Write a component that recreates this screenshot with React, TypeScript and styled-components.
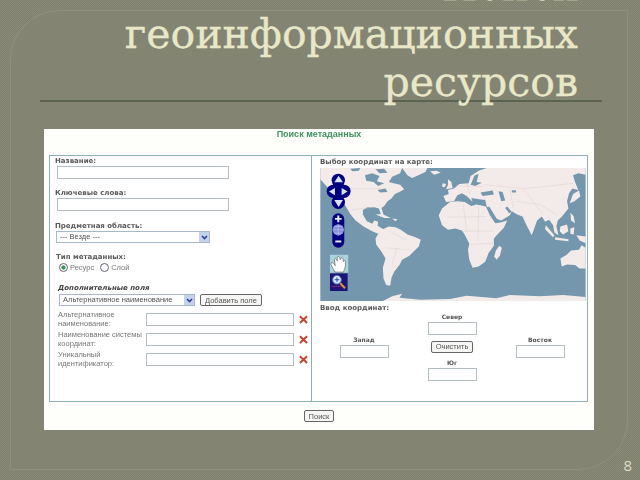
import { FC } from 'react';
import styled, { createGlobalStyle } from 'styled-components';

const GlobalStyle = createGlobalStyle`
  html, body {
    margin: 0;
    padding: 0;
    background: #838573;
  }
`;

const App: FC = () => {
  return (
    <>
      <GlobalStyle />
      <Page>
        <Frame>
          <Title>
            Поиск
            <br />
            геоинформационных
            <br />
            ресурсов
          </Title>
          <Sheet>
            <SheetHeading>Поиск метаданных</SheetHeading>
            <Columns>
              <LeftColumn>
                <BoldLabel>Название:</BoldLabel>
                <TextField $width={172} $left={2} />
                <BoldLabel $top={10}>Ключевые слова:</BoldLabel>
                <TextField $width={172} $left={2} />
                <BoldLabel $top={11}>Предметная область:</BoldLabel>
                <SelectBox $width={154} $left={1}>
                  --- Везде ---
                  <SelectArrow />
                </SelectBox>
                <BoldLabel $top={10} $left={1}>
                  Тип метаданных:
                </BoldLabel>
                <RadioRow>
                  <Radio $checked />
                  <RadioText>Ресурс</RadioText>
                  <Radio />
                  <RadioText>Слой</RadioText>
                </RadioRow>
                <ExtraHeading>Дополнительные поля</ExtraHeading>
                <AddRow>
                  <SelectBox $width={136}>
                    Альтернативное наименование
                    <SelectArrow />
                  </SelectBox>
                  <PlainButton>Добавить поле</PlainButton>
                </AddRow>
                {extraFields.map((field) => (
                  <ExtraRow key={field}>
                    <ExtraLabel>{field}</ExtraLabel>
                    <TextField $width={148} />
                    <RemoveIcon />
                  </ExtraRow>
                ))}
              </LeftColumn>
              <RightColumn>
                <BoldLabel>Выбор координат на карте:</BoldLabel>
                <WorldMap />
                <BoldLabel $top={3}>Ввод координат:</BoldLabel>
                <CoordGrid>
                  <CoordCell $col={2}>
                    <CoordLabel>Север</CoordLabel>
                    <TextField $width={49} />
                  </CoordCell>
                  <CoordCell $col={1}>
                    <CoordLabel>Запад</CoordLabel>
                    <TextField $width={49} />
                  </CoordCell>
                  <CoordCell $col={2} $center>
                    <PlainButton>Очистить</PlainButton>
                  </CoordCell>
                  <CoordCell $col={3}>
                    <CoordLabel>Восток</CoordLabel>
                    <TextField $width={49} />
                  </CoordCell>
                  <CoordCell $col={2}>
                    <CoordLabel>Юг</CoordLabel>
                    <TextField $width={49} />
                  </CoordCell>
                </CoordGrid>
              </RightColumn>
            </Columns>
            <SearchRow>
              <PlainButton>Поиск</PlainButton>
            </SearchRow>
          </Sheet>
        </Frame>
        <PageNumber>8</PageNumber>
      </Page>
    </>
  );
};

export default App;

const extraFields = [
  'Альтернативное наименование:',
  'Наименование системы координат:',
  'Уникальный идентификатор:',
];

const RemoveIcon: FC = () => (
  <RemoveSvg viewBox="0 0 10 10">
    <path d="M1 1.5 L9 8.8 M9 1.5 L1 8.8" stroke="#c4442c" strokeWidth="2.2" />
  </RemoveSvg>
);

const SelectArrow: FC = () => (
  <ArrowBox>
    <svg width="7" height="5" viewBox="0 0 7 5">
      <path d="M1 1 L3.5 3.5 L6 1" fill="none" stroke="#2b3f8f" strokeWidth="1.6" />
    </svg>
  </ArrowBox>
);

const WorldMap: FC = () => (
  <MapFrame>
    <svg width="266" height="133" viewBox="30 50 798 400" style={{ display: 'block' }}>
      <rect x="30" y="50" width="798" height="400" fill="#7597ae" />
      <g fill="#f3ebe9">
        {/* north america */}
        <path d="M30 50 L276 50 L270 66 L246 76 L236 92 L250 96 L270 100 L282 114 L268 122 L254 128 L244 142 L232 150 L222 164 L214 170 L220 190 L214 194 L206 172 L192 168 L172 168 L158 176 L158 190 L170 210 L186 218 L192 208 L204 212 L202 224 L216 232 L224 236 L204 248 L186 240 L160 226 L136 208 L120 188 L106 164 L92 142 L66 122 L48 104 L30 84 Z" />
        {/* cuba */}
        <path d="M196 190 L216 188 L242 200 L222 200 Z" />
        <path d="M246 202 L262 204 L256 210 Z" />
        {/* greenland, iceland */}
        <path d="M276 50 L352 50 L346 62 L328 70 L306 80 L292 72 Z" />
        <path d="M360 60 L380 58 L392 64 L372 70 Z" />
        {/* south america */}
        <path d="M204 248 L218 234 L236 226 L256 228 L272 236 L292 250 L316 258 L332 266 L326 286 L310 302 L298 314 L276 326 L268 342 L252 362 L244 380 L240 404 L228 402 L220 382 L218 350 L226 322 L214 302 L198 280 L196 262 Z" />
        {/* africa */}
        <path d="M386 192 L396 172 L420 152 L444 150 L464 152 L484 164 L500 160 L528 166 L540 192 L556 216 L572 214 L592 208 L582 230 L566 246 L552 262 L552 284 L536 306 L526 332 L506 346 L488 350 L478 326 L474 296 L478 278 L464 250 L456 238 L436 232 L414 236 L396 222 Z" />
        {/* madagascar */}
        <path d="M568 284 L576 290 L570 314 L560 326 L553 316 L558 298 Z" />
        {/* europe and asia */}
        <path d="M476 96 L482 74 L506 58 L530 50 L828 50 L828 70 L806 66 L790 72 L796 92 L806 116 L788 112 L778 126 L772 150 L776 172 L758 194 L744 208 L740 226 L746 252 L734 244 L730 222 L718 206 L706 212 L696 196 L682 208 L666 252 L652 226 L638 196 L622 190 L606 180 L600 192 L574 208 L558 202 L540 176 L530 164 L526 146 L508 144 L484 140 L488 152 L472 136 L456 126 L442 132 L432 150 L408 152 L400 134 L416 128 L414 116 L432 112 L448 98 Z" />
        {/* uk and ireland */}
        <path d="M414 84 L424 92 L428 110 L408 114 L414 100 Z" />
        <path d="M398 96 L408 98 L404 108 L396 106 Z" />
        {/* japan, philippines */}
        <path d="M790 128 L808 118 L812 136 L794 150 L780 156 Z" />
        <path d="M782 184 L792 196 L796 216 L784 208 Z" />
        {/* indonesia */}
        <path d="M708 222 L734 252 L730 258 L706 234 Z" />
        <path d="M736 258 L776 264 L776 270 L736 266 Z" />
        <path d="M752 226 L772 220 L776 240 L760 250 L750 240 Z" />
        <path d="M782 232 L794 228 L792 250 L782 248 Z" />
        <path d="M800 252 L828 256 L828 276 L810 268 Z" />
        {/* australia */}
        <path d="M752 322 L770 312 L784 298 L808 296 L816 282 L828 290 L828 352 L810 352 L796 342 L772 340 L756 346 Z" />
        {/* antarctica */}
        <path d="M218 450 L246 436 L276 428 L268 440 L330 446 L420 444 L470 434 L560 442 L600 432 L690 436 L760 432 L828 438 L828 450 Z" />
      </g>
      <g fill="#7597ae">
        {/* hudson bay and arctic */}
        <path d="M164 72 L186 66 L208 74 L200 90 L222 96 L204 104 L190 92 L168 88 Z" />
        <path d="M196 54 L222 52 L232 64 L208 66 Z" />
        <path d="M120 52 L150 50 L146 58 L126 60 Z" />
        {/* great lakes */}
        <path d="M202 116 L226 112 L232 122 L210 124 Z" />
        {/* baltic */}
        <path d="M494 72 L506 68 L500 92 L516 94 L496 104 L482 100 Z" />
        {/* black sea, caspian */}
        <path d="M512 124 L548 118 L552 130 L518 134 Z" />
        <path d="M566 120 L578 122 L586 148 L574 150 Z" />
        {/* red sea, gulf */}
        <path d="M532 168 L538 166 L566 212 L560 214 Z" />
        <path d="M586 170 L592 166 L606 182 L598 186 Z" />
        {/* lakes in central asia */}
        <path d="M606 118 L618 116 L618 124 L606 124 Z" />
      </g>
      <g fill="none" stroke="#d8cbc9" strokeWidth="1.2">
        <path d="M70 112 L222 112 M120 176 L190 168 M260 290 L246 340 M226 290 L300 296 M238 240 L290 268" />
        <path d="M410 198 L530 196 M460 160 L470 236 M506 166 L504 270 M480 280 L550 276 M456 240 L550 240" />
        <path d="M440 104 L520 106 M470 96 L480 130 M520 100 L640 112 L720 104 L790 96 M600 112 L610 170 M640 112 L700 190 M620 150 L690 160 L740 190" />
      </g>
      {/* pan control */}
      <g fill="#00007e">
        <circle cx="84" cy="87" r="20" />
        <circle cx="84" cy="153" r="20" />
        <circle cx="69" cy="120" r="20" />
        <circle cx="101" cy="120" r="20" />
        <rect x="68" y="90" width="32" height="60" />
      </g>
      <g fill="#dbe2f4">
        <path d="M85 73 L98 93 L72 93 Z" />
        <path d="M85 167 L98 146 L72 146 Z" />
        <path d="M56 121 L74 110 L74 132 Z" />
        <path d="M112 121 L94 110 L94 132 Z" />
      </g>
      {/* zoom bar */}
      <rect x="66" y="186" width="36" height="104" rx="18" fill="#00007e" />
      <path d="M74 203 H94 M84 193 V213" stroke="#e6ebf7" strokeWidth="6" />
      <circle cx="84" cy="236" r="17" fill="#8a90d8" />
      <path d="M67 236 H101 M84 219 V253 M71 226 H97 M71 246 H97" stroke="#c9cdf0" strokeWidth="1.5" />
      <path d="M75 271 H93" stroke="#e6ebf7" strokeWidth="6" />
      {/* hand tool */}
      <rect x="59" y="311" width="55" height="54" fill="#a9d2da" />
      <path
        d="M74 363 C68 350 60 342 62 336 C68 332 72 340 75 344 L72 326 C74 320 79 322 81 330 L81 318 C84 314 88 316 90 326 L93 320 C97 318 99 322 99 332 L103 328 C107 328 107 336 105 346 C103 354 101 358 100 363 Z"
        fill="#fff"
        stroke="#555"
        strokeWidth="1.8"
      />
      {/* zoom box tool */}
      <rect x="59" y="367" width="53" height="53" fill="#1c1478" />
      <path d="M64 406 H106" stroke="#8a2a6a" strokeWidth="3" />
      <path d="M90 396 L104 412" stroke="#d89a3a" strokeWidth="6" />
      <circle cx="80" cy="386" r="13" fill="#dfe8f8" stroke="#4a78c8" strokeWidth="3" />
      <path d="M73 386 H87 M80 379 V393" stroke="#2a50a8" strokeWidth="3" />
    </svg>
  </MapFrame>
);

const Page = styled.div`
  position: relative;
  width: 640px;
  height: 480px;
  overflow: hidden;
  box-sizing: border-box;
  padding: 10px 12px 10px 10px;
  background: repeating-conic-gradient(#80826f 0 25%, #888a78 0 50%) 0 0 / 2px 2px;
`;

const Frame = styled.div`
  height: 100%;
  box-sizing: border-box;
  display: flex;
  flex-direction: column;
  background: #838572;
  border: 1px solid #8f9180;
  border-radius: 50px 0 50px 0;
`;

const Title = styled.h1`
  margin: -49px 0 0 29px;
  width: 562px;
  box-sizing: border-box;
  padding-right: 24px;
  height: 140px;
  border-bottom: 2px solid #5c6350;
  font-family: 'DejaVu Serif', serif;
  font-size: 41px;
  font-weight: 400;
  line-height: 48px;
  text-align: right;
  white-space: nowrap;
  color: #e8e8c9;
  -webkit-text-stroke: 0.3px #e8e8c9;
`;

const Sheet = styled.div`
  margin: 27px 0 0 33px;
  width: 550px;
  height: 301px;
  display: flex;
  flex-direction: column;
  background: #fefefb;
  filter: blur(0.45px);
  font-family: 'Liberation Sans', Arial, sans-serif;
  color: #666;
`;

const SheetHeading = styled.div`
  height: 26px;
  text-align: center;
  font-size: 9px;
  line-height: 10px;
  font-weight: 700;
  color: #3f9160;
`;

const Columns = styled.div`
  margin-left: 5px;
  width: 539px;
  height: 247px;
  display: grid;
  grid-template-columns: 262px 1fr;
  box-sizing: border-box;
  border: 1px solid #8fb0b8;
  background: #fff;
`;

const LeftColumn = styled.div`
  padding: 1px 0 0 5px;
  border-right: 1px solid #8fb0b8;
`;

const RightColumn = styled.div`
  padding: 2px 0 0 8px;
`;

const BoldLabel = styled.div<{ $top?: number; $left?: number }>`
  margin: ${(p) => p.$top ?? 0}px 0 0 ${(p) => p.$left ?? 0}px;
  font-family: 'DejaVu Sans', sans-serif;
  font-size: 7px;
  line-height: 9px;
  font-weight: 700;
  color: #5a5a5a;
`;

const TextField = styled.input.attrs({ type: 'text' })<{ $width: number; $left?: number }>`
  display: block;
  width: ${(p) => p.$width}px;
  height: 13px;
  padding: 0;
  margin: 0 0 0 ${(p) => p.$left ?? 0}px;
  box-sizing: border-box;
  border: 1px solid #b4bec2;
  background: #fff;
  outline: none;
`;

const SelectBox = styled.div<{ $width: number; $left?: number }>`
  position: relative;
  width: ${(p) => p.$width}px;
  height: 12px;
  margin-left: ${(p) => p.$left ?? 0}px;
  box-sizing: border-box;
  padding-left: 3px;
  border: 1px solid #a9b8c8;
  font-size: 7.5px;
  line-height: 10px;
  white-space: nowrap;
  color: #555;
`;

const ArrowBox = styled.span`
  position: absolute;
  top: 0;
  right: 0;
  bottom: 0;
  width: 10px;
  display: flex;
  align-items: center;
  justify-content: center;
  background: #c4d2ee;
`;

const RadioRow = styled.div`
  display: flex;
  align-items: center;
  margin: 0 0 0 4px;
  height: 11px;
`;

const Radio = styled.span<{ $checked?: boolean }>`
  width: 9px;
  height: 9px;
  box-sizing: border-box;
  border: 1px solid #667;
  border-radius: 50%;
  background: ${(p) => (p.$checked ? 'radial-gradient(#3f9160 0 1.8px, #fff 2.4px)' : '#fff')};
`;

const RadioText = styled.span`
  margin: 0 6px 0 2px;
  font-size: 7.5px;
  color: #777;
`;

const ExtraHeading = styled.div`
  margin: 11px 0 0 3px;
  font-family: 'DejaVu Sans', sans-serif;
  font-size: 7px;
  line-height: 9px;
  font-weight: 700;
  font-style: italic;
  color: #444;
`;

const AddRow = styled.div`
  display: flex;
  gap: 5px;
  margin: 1px 0 3px 4px;
`;

const PlainButton = styled.button`
  height: 12px;
  padding: 0 4px;
  box-sizing: border-box;
  border: 1px solid #666;
  border-radius: 2px;
  background: #f6f6f4;
  font-family: 'Liberation Sans', Arial, sans-serif;
  font-size: 7.5px;
  line-height: 9px;
  color: #555;
`;

const ExtraRow = styled.div`
  display: flex;
  align-items: center;
  height: 20px;
  margin-left: 3px;
`;

const ExtraLabel = styled.div`
  width: 88px;
  font-size: 7.5px;
  line-height: 9px;
  color: #777;
`;

const RemoveSvg = styled.svg`
  width: 9px;
  height: 9px;
  margin-left: 5px;
`;

const MapFrame = styled.div`
  margin-top: 1px;
  width: 266px;
  height: 133px;
`;

const CoordGrid = styled.div`
  margin-top: -1px;
  display: grid;
  grid-template-columns: repeat(3, 88px);
  grid-auto-rows: 23px;
`;

const CoordCell = styled.div<{ $col: number; $center?: boolean }>`
  grid-column: ${(p) => p.$col};
  display: flex;
  flex-direction: column;
  align-items: center;
  justify-content: ${(p) => (p.$center ? 'center' : 'flex-end')};
`;

const CoordLabel = styled.div`
  font-family: 'DejaVu Sans', sans-serif;
  font-size: 6px;
  line-height: 8px;
  margin-bottom: 1px;
  font-weight: 700;
  color: #555;
`;

const SearchRow = styled.div`
  flex: 1;
  display: flex;
  align-items: center;
  justify-content: center;
`;

const PageNumber = styled.div`
  position: absolute;
  right: 8px;
  bottom: 7px;
  font-family: 'Open Sans', sans-serif;
  font-size: 15px;
  line-height: 15px;
  color: #dcdcc4;
`;
